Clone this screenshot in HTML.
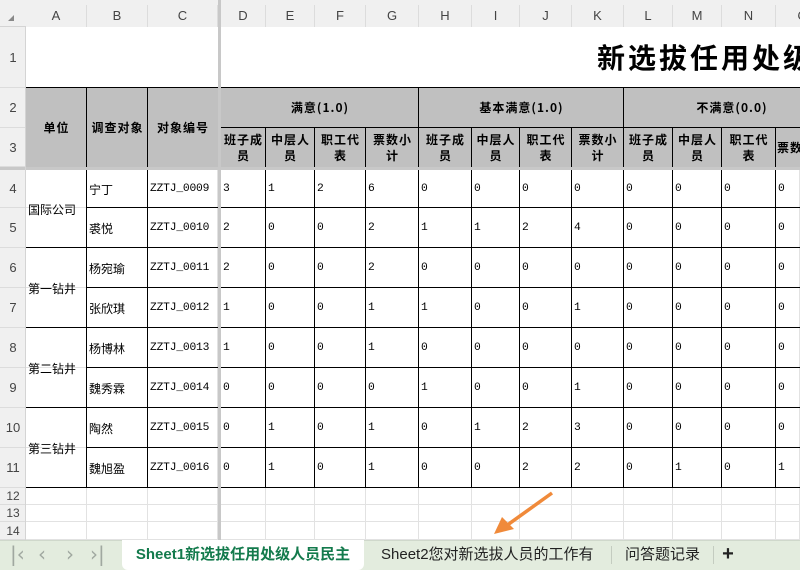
<!DOCTYPE html>
<html><head><meta charset="utf-8"><style>
*{margin:0;padding:0;box-sizing:border-box}
body{width:800px;height:570px;overflow:hidden;background:#fff;position:relative;font-family:"Liberation Sans","Noto Sans CJK SC",sans-serif}
#g{position:absolute;left:0;top:0;width:800px;height:570px;overflow:hidden}
.a{position:absolute;white-space:nowrap}
.ch{color:#444;font-size:13px;text-align:center;line-height:27px;top:0;height:27px;background:#f0f0f0;border-right:1px solid #dcdcdc}
.rh{color:#444;font-size:13px;text-align:center;left:0;width:26px;background:#f0f0f0;border-bottom:1px solid #dcdcdc;display:flex;align-items:center;justify-content:center}
.c{font-size:11.3px;color:#000;display:flex;align-items:center;padding-left:2px;font-family:"Liberation Mono","Noto Sans CJK SC",monospace;white-space:nowrap;overflow:hidden}
.h{background:#c0c0c0;font-weight:bold;font-size:12px;text-align:center;display:flex;align-items:center;justify-content:center;line-height:16px;letter-spacing:1px;font-family:"Noto Sans CJK SC",sans-serif;white-space:normal}
</style></head><body>
<div id="g"></div>
<script>
var cx=[26,87,148,218,266,315,366,419,472,520,572,624,673,722,776,800];
var cl=["A","B","C","D","E","F","G","H","I","J","K","L","M","N","O"];
var ry=[27,88,128,167,208,248,288,328,368,408,448,488,505,522,540];
var h='';
function d(cls,x,y,w,ht,s,t){h+='<div class="a '+cls+'" style="left:'+x+'px;top:'+y+'px;width:'+w+'px;height:'+ht+'px;'+(s||'')+'">'+(t===undefined?'':String(t))+'</div>';}
for(var i=0;i<cx.length;i++)d('',cx[i]-1,27,1,513,'background:#e2e2e2');
for(var j=0;j<ry.length;j++)d('',26,ry[j]-1,774,1,'background:#e2e2e2');
d('h',26,88,774,80,'');
d('',26,27,774,60,'background:#fff');
d('',597,27,203,61,'overflow:hidden;font-size:28px;font-weight:bold;line-height:61px;letter-spacing:3px;font-family:\'Noto Sans CJK SC\',sans-serif','新选拔任用处级人员民主');
d('h',26,88,61,80,'','单位');d('h',87,88,61,80,'','调查对象');d('h',148,88,70,80,'','对象编号');
var grp=[['满意(1.0)',221,419],['基本满意(1.0)',419,624],['不满意(0.0)',624,830]];
grp.forEach(function(g){d('h',g[1],88,Math.min(g[2],800)-g[1],40,'',g[2]>800?'<span style="position:relative;left:20px">'+g[0]+'</span>':g[0]);});
var sub=['班子成员','中层人员','职工代表','票数小计'];
for(var k=3;k<14;k++){var x=cx[k]+(k==3?3:0);d('h',x,128,cx[k+1]-x,40,'padding:0 2px;overflow:hidden',sub[(k-3)%4]);}
d('',776,128,24,40,'overflow:hidden;background:#c0c0c0','<div class="h" style="position:absolute;left:1px;top:0;width:52px;height:40px">票数小计</div>');
d('',26,87,774,1,'background:#000');d('',221,127,579,1,'background:#000');
[87,148].forEach(function(x){d('',x-1,88,1,80,'background:#000')});
[419,624].forEach(function(x){d('',x-1,88,1,80,'background:#000')});
for(var k=4;k<15;k++)d('',cx[k]-1,128,1,40,'background:#000');
d('',26,167,774,3,'background:#c8c8c8');
var names=['宁丁','裘悦','杨宛瑜','张欣琪','杨博林','魏秀霖','陶然','魏旭盈'];
var units=['国际公司','第一钻井','第二钻井','第三钻井'];
var vals=[[3,1,2,6,0,0,0,0,0,0,0,0],[2,0,0,2,1,1,2,4,0,0,0,0],[2,0,0,2,0,0,0,0,0,0,0,0],[1,0,0,1,1,0,0,1,0,0,0,0],[1,0,0,1,0,0,0,0,0,0,0,0],[0,0,0,0,1,0,0,1,0,0,0,0],[0,1,0,1,0,1,2,3,0,0,0,0],[0,1,0,1,0,0,2,2,0,1,0,1]];
var rows=[170,208,248,288,328,368,408,448,488];
for(var r=0;r<8;r++){var y=rows[r],hh=rows[r+1]-y;
 d('c',87,y,61,hh,'font-size:12px;font-family:\'Noto Sans CJK SC\',sans-serif',names[r]);
 d('c',148,y,70,hh,'letter-spacing:-0.2px','ZZTJ_'+('000'+(9+r)).slice(-4));
 for(var k=3;k<15;k++){var x=cx[k]+(k==3?3:0);d('c',x,y,cx[k+1]-x,hh,'',vals[r][k-3]);}
 d('',87,y+hh-1,713,1,'background:#000');
 if(r%2==1)d('',26,y+hh-1,61,1,'background:#000');
}
for(var u=0;u<4;u++)d('c',26,rows[u*2],61,rows[u*2+2]-rows[u*2],'font-size:12px;font-family:\'Noto Sans CJK SC\',sans-serif',units[u]);
[87,148].forEach(function(x){d('',x-1,170,1,318,'background:#000')});
for(var k=4;k<15;k++)d('',cx[k]-1,170,1,318,'background:#000');
d('',218,0,3,540,'background:#c8c8c8');
d('',0,0,800,27,'background:#f0f0f0;border-bottom:1px solid #d4d4d4');
h+='<div class="a" style="left:8px;top:15px;width:0;height:0;border-left:6px solid transparent;border-bottom:6px solid #888"></div>';
for(var k=0;k<15;k++){var x=cx[k]+(k==3?3:0);d('ch',x,5,(k==14?54:cx[k+1]-x),22,'top:5px;line-height:22px',cl[k]);}
d('',218,0,3,27,'background:#c8c8c8');
var rl=['1','2','3','4','5','6','7','8','9','10','11','12','13','14'];
var rb=[27,88,128,170,208,248,288,328,368,408,448,488,505,522,540];
for(var j=0;j<14;j++){var ys=rb[j],e=rb[j+1];if(j==2)e=167;
 d('rh',0,ys,26,e-ys,'font-size:'+(j>=11?12:13)+'px',rl[j]);}
d('',0,167,26,3,'background:#c8c8c8');
d('',25,27,1,513,'background:#d4d4d4');
d('',0,540,800,30,'background:#e3ecde;border-top:1px solid #cfd8cb');
var nv=[[10,'|‹'],[38,'‹'],[66,'›'],[90,'›|']];
nv.forEach(function(n){d('',n[0],541,20,28,'color:#a0a8a0;font-size:20px;line-height:26px;font-family:\'DejaVu Sans\',sans-serif',n[1]);});
d('',122,540,242,30,'background:#fff;border-radius:0 0 6px 6px');
d('',122,540,242,30,'font-weight:bold;color:#137a4c;font-size:15px;text-align:center;line-height:30px','Sheet1新选拔任用处级人员民主');
d('',381,540,225,30,'color:#222;font-size:15px;line-height:30px','Sheet2您对新选拔人员的工作有');
d('',611,546,1,18,'background:#c4ccc0');
d('',625,540,80,30,'color:#222;font-size:15px;line-height:30px','问答题记录');
d('',713,546,1,18,'background:#c4ccc0');
d('',718,540,20,30,'color:#222;font-size:20px;font-weight:bold;text-align:center;line-height:29px','+');
h+='<svg style="position:absolute;left:490px;top:490px" width="70" height="50"><line x1="62" y1="3" x2="16" y2="36" stroke="#f08a3a" stroke-width="3.5"/><polygon points="4,44 12,27 24,39" fill="#f08a3a"/></svg>';
document.getElementById('g').innerHTML=h;
</script>
</body></html>
